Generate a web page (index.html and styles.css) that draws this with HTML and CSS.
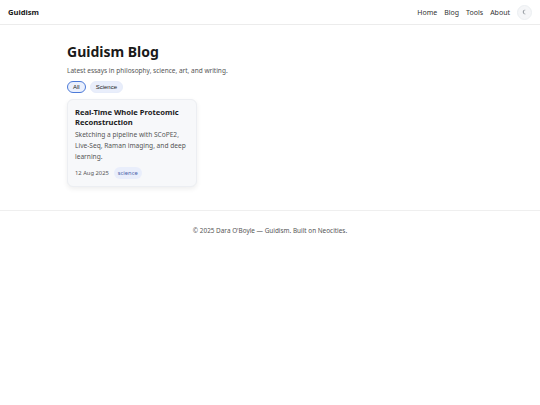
FILE: index.html
```html
<!DOCTYPE html>
<html lang="en">
<head>
    <meta charset="UTF-8">
    <meta name="viewport" content="width=device-width, initial-scale=1.0">
    <title>Guidism Blog</title>
    <link rel="stylesheet" href="styles.css">
</head>
<body>
<header class="site-header">
    <a class="brand" href="#">Guidism</a>
    <nav class="nav">
        <a href="#">Home</a>
        <a href="#">Blog</a>
        <a href="#">Tools</a>
        <a href="#">About</a>
        <button class="theme-btn" aria-label="Toggle theme">
            <svg width="6" height="6" viewBox="0 0 10 10"><path d="M6.5 1.5 A3.8 3.8 0 1 0 6.5 8.5 A3 3 0 0 1 6.5 1.5 Z" fill="#9aa0a6"/></svg>
        </button>
    </nav>
</header>

<main class="container">
    <h1 class="title">Guidism Blog</h1>
    <p class="lead">Latest essays in philosophy, science, art, and writing.</p>
    <div class="filters">
        <button class="chip active">All</button>
        <button class="chip">Science</button>
    </div>
    <div class="posts">
        <article class="card">
            <h2 class="card-title">Real-Time Whole Proteomic Reconstruction</h2>
            <p class="card-text">Sketching a pipeline with SCoPE2, Live-Seq, Raman imaging, and deep learning.</p>
            <div class="meta">
                <span class="date">12 Aug 2025</span>
                <span class="tag">science</span>
            </div>
        </article>
    </div>
</main>

<footer class="site-footer">
    <p>&copy; 2025 Dara O'Boyle — Guidism. Built on Neocities.</p>
</footer>
</body>
</html>
```

FILE: styles.css
```css
body {
    margin: 0;
    font-family: 'Noto Sans', 'Open Sans', sans-serif;
    background: #ffffff;
    color: #1a1a1a;
}

a {
    color: inherit;
    text-decoration: none;
}

.site-header {
    height: 24px;
    border-bottom: 1px solid #ececec;
    display: flex;
    align-items: center;
    justify-content: space-between;
    padding: 0 8px 0 8px;
}

.brand {
    font-weight: 700;
    font-size: 7.6px;
}

.nav {
    display: flex;
    align-items: center;
    gap: 7px;
    font-size: 7px;
    color: #333;
}

.theme-btn {
    width: 15px;
    height: 15px;
    border-radius: 50%;
    border: 1px solid #eceff2;
    background: #f5f6f8;
    padding: 0;
    display: flex;
    align-items: center;
    justify-content: center;
}

.container {
    max-width: 406px;
    margin: 0 auto;
    padding: 17px 0 23px;
}

.title {
    font-size: 14px;
    font-weight: 700;
    margin: 0 0 4px;
    line-height: 1.4;
}

.lead {
    font-size: 6.5px;
    color: #555;
    margin: 0 0 6px;
}

.filters {
    display: flex;
    gap: 4px;
    margin-bottom: 6px;
}

.chip {
    font-family: 'Liberation Sans', Arial, sans-serif;
    font-size: 6px;
    height: 12px;
    padding: 0 5px;
    border-radius: 7px;
    border: 1px solid #e6ecfa;
    background: #e9eefb;
    color: #222;
}

.chip.active {
    border: 1px solid #4c7ad8;
    background: #eaf0fd;
}

.posts {
    display: grid;
    grid-template-columns: repeat(3, 1fr);
    gap: 8px;
}

.card {
    background: #f7f8fa;
    border: 1px solid #eceef2;
    border-radius: 6px;
    box-shadow: 0 2px 5px rgba(0, 0, 0, 0.07);
    padding: 7px 7px 7px;
}

.card-title {
    font-size: 7.6px;
    font-weight: 700;
    line-height: 1.35;
    margin: 0 0 3px;
}

.card-text {
    font-size: 6.6px;
    color: #555;
    line-height: 1.66;
    margin: 0 0 4px;
}

.meta {
    display: flex;
    align-items: center;
    gap: 5px;
    font-size: 5.8px;
    color: #555;
}

.tag {
    background: #e9eefb;
    color: #4a5ea8;
    border-radius: 6px;
    padding: 2px 4px;
}

.site-footer {
    border-top: 1px solid #efefef;
    text-align: center;
    font-size: 6.4px;
    color: #555;
    padding: 9px 0;
}
```
